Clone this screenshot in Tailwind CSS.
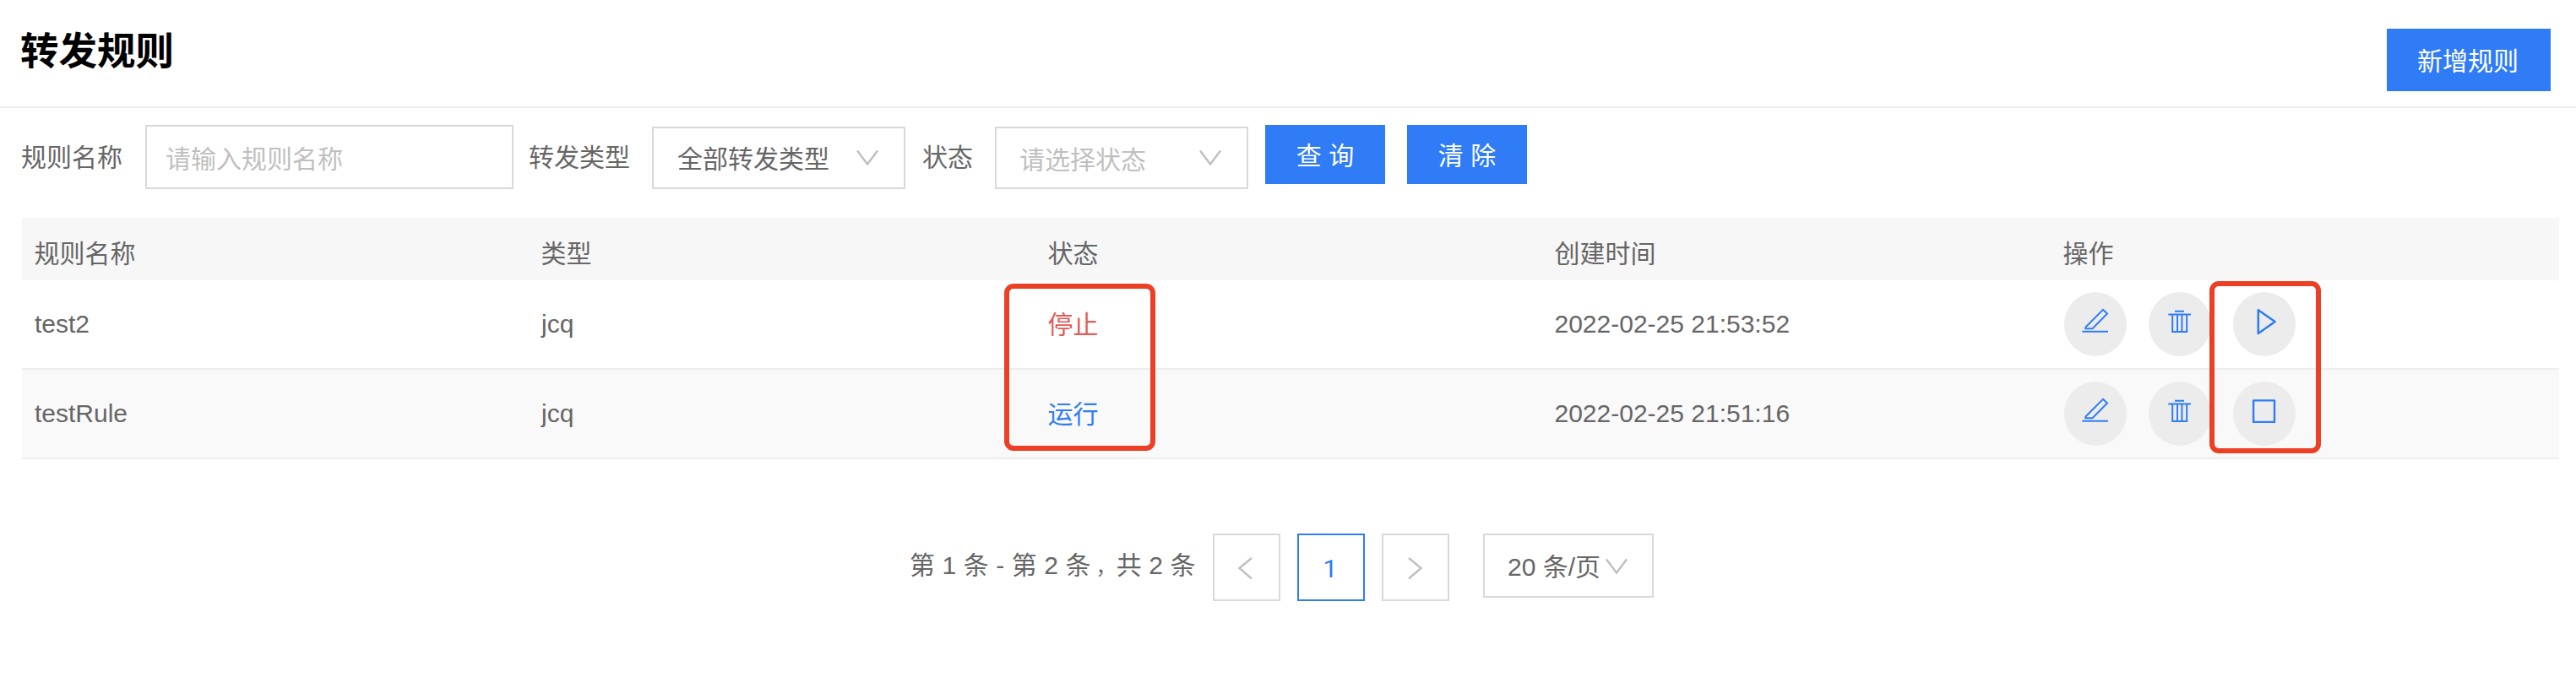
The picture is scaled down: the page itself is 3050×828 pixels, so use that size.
<!DOCTYPE html>
<html lang="zh-CN">
<head>
<meta charset="utf-8">
<title>转发规则</title>
<script src="https://cdn.jsdelivr.net/npm/@tailwindcss/browser@4"></script>
</head>
<body class="relative h-[828px] w-[3050px] overflow-hidden bg-white font-['Liberation_Sans','Noto_Sans_CJK_SC',sans-serif] text-[30px] leading-[40px] text-[#666]">
<svg class="hidden">
  <symbol id="edit" viewBox="0 0 74 76"><path d="M46 20.8 51 25.5 33.5 43.2H25.2L25.6 41.2ZM21.3 46.8H52" fill="none" stroke="#2f7cf6" stroke-width="2"/></symbol>
  <symbol id="trash" viewBox="0 0 74 76"><path d="M31 22.7H42M23.3 26.4H50M28.2 27V47H45.2V27M34 27V47M39.4 27V47" fill="none" stroke="#2f7cf6" stroke-width="2"/></symbol>
  <symbol id="play" viewBox="0 0 74 76"><path d="M29.8 21.2V49L49.6 35Z" fill="none" stroke="#2f7cf6" stroke-width="2.6" stroke-linejoin="round"/></symbol>
  <symbol id="stop" viewBox="0 0 74 76"><path d="M24.1 22.4H49V47.9H24.1Z" fill="none" stroke="#2f7cf6" stroke-width="2.4" stroke-linejoin="round"/></symbol>
  <symbol id="down" viewBox="0 0 26 18"><path d="M1 .5 13 16.5 25 .5" fill="none" stroke="#bfbfbf" stroke-width="2.4"/></symbol>
</svg>

<header class="flex h-32 items-start justify-between border-b-2 border-[#eee] pr-[30px] pl-6">
  <h1 class="mt-[28px] text-[45.5px] leading-[68px] font-bold text-black">转发规则</h1>
  <button class="mt-[34px] h-[74px] w-[194px] bg-[#2f7cf6] pt-1 pr-0.5 text-white">新增规则</button>
</header>

<div class="flex h-[130px] items-start pt-5 pl-[25px]">
  <span class="mt-[19px] w-[147px]">规则名称</span>
  <div class="h-[76px] w-[436px] border-2 border-[#d9d9d9] pt-[19px] pl-[22px] text-[#bfbfbf]">请输入规则名称</div>
  <span class="mt-[19px] ml-[18px] w-[146px]">转发类型</span>
  <div class="mt-0.5 flex h-[74px] w-[300px] items-start justify-between border-2 border-[#d9d9d9] pt-[17px] pr-[30px] pl-7">
    <span>全部转发类型</span><svg class="mt-[9px] h-[18px] w-[26px]"><use href="#down"/></svg>
  </div>
  <span class="mt-[19px] ml-5 w-[86px]">状态</span>
  <div class="mt-0.5 flex h-[74px] w-[300px] items-start justify-between border-2 border-[#d9d9d9] pt-[18px] pr-[30px] pl-[27px] text-[#bfbfbf]">
    <span>请选择状态</span><svg class="mt-2 h-[18px] w-[26px]"><use href="#down"/></svg>
  </div>
  <button class="ml-5 h-[70px] w-[142px] bg-[#2f7cf6] pt-1 text-white">查 询</button>
  <button class="ml-[26px] h-[70px] w-[142px] bg-[#2f7cf6] pt-1 text-white">清 除</button>
</div>

<main class="ml-[26px] w-[3004px]">
  <div class="grid h-[74px] grid-cols-[600px_600px_600px_602px_1fr] bg-[#f7f7f7] pt-[23px] *:pl-[14.5px]">
    <span>规则名称</span><span>类型</span><span>状态</span><span>创建时间</span><span>操作</span>
  </div>
  <div class="grid h-[106px] grid-cols-[600px_600px_600px_602px_1fr] items-center border-b-2 border-[#eee]">
    <span class="pl-[15px]">test2</span><span class="pl-[15px]">jcq</span><span class="pt-0.5 pl-[14.5px] text-[#e25b57]">停止</span><span class="pl-[14.5px]">2022-02-25 21:53:52</span>
    <div class="flex gap-[26px] pl-4">
      <svg class="h-[76px] w-[74px] rounded-[50%] bg-[#ececec]"><use href="#edit"/></svg>
      <svg class="h-[76px] w-[74px] rounded-[50%] bg-[#ececec]"><use href="#trash"/></svg>
      <svg class="h-[76px] w-[74px] rounded-[50%] bg-[#ececec]"><use href="#play"/></svg>
    </div>
  </div>
  <div class="grid h-[106px] grid-cols-[600px_600px_600px_602px_1fr] items-center border-b-2 border-[#eee] bg-[#f9f9f9]">
    <span class="pl-[15px]">testRule</span><span class="pl-[15px]">jcq</span><span class="pt-0.5 pl-[14.5px] text-[#2f7cf6]">运行</span><span class="pl-[14.5px]">2022-02-25 21:51:16</span>
    <div class="flex gap-[26px] pl-4">
      <svg class="h-[76px] w-[74px] rounded-[50%] bg-[#ececec]"><use href="#edit"/></svg>
      <svg class="h-[76px] w-[74px] rounded-[50%] bg-[#ececec]"><use href="#trash"/></svg>
      <svg class="h-[76px] w-[74px] rounded-[50%] bg-[#ececec]"><use href="#stop"/></svg>
    </div>
  </div>
</main>

<nav class="mt-[88px] flex items-start pl-[1077px]">
  <span class="mt-[18px] w-[359px] tracking-[0.1px] whitespace-nowrap">第 1 条 - 第 2 条<span class="inline-block w-[30px] text-right text-[24px]">，</span>共 2 条</span>
  <div class="flex gap-5">
    <div class="size-20 border-2 border-[#d9d9d9]"><svg class="size-full" viewBox="0 0 76 76"><path d="M44 27 29.5 39 44 51.500" fill="none" stroke="#bfbfbf" stroke-width="2.4"/></svg></div>
    <div class="size-20 border-2 border-[#2f7cf6] pt-[20px] pr-0.5 text-center font-['Roboto',sans-serif] text-[#2f7cf6]">1</div>
    <div class="size-20 border-2 border-[#d9d9d9]"><svg class="size-full" viewBox="0 0 76 76"><path d="M30 27 44.500 39 30 51.500" fill="none" stroke="#bfbfbf" stroke-width="2.4"/></svg></div>
  </div>
  <div class="ml-10 flex h-[76px] w-[202px] items-start border-2 border-[#d9d9d9] pt-[18px] pl-[27px] whitespace-nowrap">
    <span class="w-[116px]">20 条/页</span><svg class="mt-[10px] h-[18px] w-[26px]"><use href="#down"/></svg>
  </div>
</nav>

<div class="absolute top-[336px] left-[1189px] h-[198px] w-[179px] rounded-[11px] border-6 border-[#eb4026]"></div>
<div class="absolute top-[333px] left-[2616px] h-[204px] w-[132px] rounded-[11px] border-6 border-[#eb4026]"></div>
</body>
</html>
